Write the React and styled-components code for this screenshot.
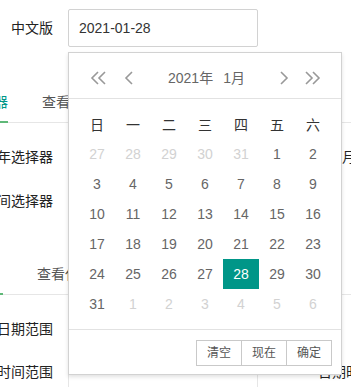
import React from 'react';
import styled, { createGlobalStyle } from 'styled-components';

const GlobalStyle = createGlobalStyle`
    html, body {
        margin: 0;
        padding: 0;
        background: #fff;
    }
    body {
        font-family: "Liberation Sans", "Noto Sans CJK SC", sans-serif;
        font-size: 14px;
        color: #333;
    }
    * {
        box-sizing: border-box;
    }
`;

const Page = styled.div`
    position: relative;
    width: 351px;
    height: 387px;
    overflow: hidden;
    padding-top: 9px;
`;

const Content = styled.div`
    margin-left: -42px;
    width: 900px;
`;

const Row = styled.div`
    display: flex;
    gap: 45px;
    margin-top: ${(p) => p.$top || 0}px;
`;

const FormItem = styled.div`
    display: flex;
    flex-shrink: 0;
`;

const Label = styled.label`
    width: 110px;
    padding: 0 15px;
    line-height: 38px;
    text-align: right;
    white-space: nowrap;
    color: #222;
`;

const Input = styled.div`
    width: 190px;
    height: 38px;
    padding-left: 10px;
    line-height: 36px;
    border: 1px solid ${(p) => (p.$focus ? '#d2d2d2' : '#e6e6e6')};
    border-radius: 2px;
    color: #333;
    background: #fff;
`;

const TabBar = styled.div`
    display: flex;
    height: 41px;
    margin-top: ${(p) => p.$top}px;
    border-bottom: 1px solid #e6e6e6;
`;

const Tab = styled.div`
    position: relative;
    flex-shrink: 0;
    margin-left: ${(p) => p.$ml}px;
    padding-right: ${(p) => p.$pr || 0}px;
    line-height: 40px;
    white-space: nowrap;
    color: ${(p) => (p.$active ? '#009688' : '#555')};

    &::after {
        content: '';
        display: ${(p) => (p.$active ? 'block' : 'none')};
        position: absolute;
        left: 0;
        right: 0;
        bottom: -1px;
        height: 2px;
        background: #5fb878;
    }
`;

const Calendar = styled.div`
    position: absolute;
    left: 68px;
    top: 52px;
    width: 274px;
    background: #fff;
    border: 1px solid #d2d2d2;
    box-shadow: 0 2px 4px rgba(0, 0, 0, 0.12);
`;

const Header = styled.div`
    display: flex;
    align-items: center;
    height: 46px;
    padding: 10px 20px 5px 21px;
    border-bottom: 1px solid #e2e2e2;
`;

const Arrow = styled.svg`
    display: block;
    flex-shrink: 0;
    margin-right: ${(p) => p.$mr || 0}px;
`;

const Title = styled.div`
    flex: 1;
    text-align: center;
    line-height: 30px;
    color: #666;

    span {
        padding: 0 5px;
    }
`;

const Grid = styled.div`
    display: grid;
    grid-template-columns: repeat(7, 36px);
    grid-auto-rows: 30px;
    padding: 10px;
`;

const WeekDay = styled.div`
    display: flex;
    align-items: center;
    justify-content: center;
    color: #333;
`;

const Day = styled.div`
    display: flex;
    align-items: center;
    justify-content: center;
    color: ${(p) => (p.$selected ? '#fff' : p.$other ? '#d2d2d2' : '#666')};
    background: ${(p) => (p.$selected ? '#009688' : 'transparent')};
`;

const Footer = styled.div`
    display: flex;
    justify-content: flex-end;
    padding: 10px 9px 8px;
    border-top: 1px solid #e2e2e2;
`;

const FooterBtn = styled.span`
    height: 26px;
    line-height: 24px;
    padding: 0 10px;
    margin-left: -1px;
    border: 1px solid #c9c9c9;
    font-size: 12px;
    color: #555;
    background: #fff;
`;

const DoubleLeft = () => (
    <Arrow width="17" height="14" viewBox="0 0 17 14" $mr={17}>
        <polyline points="8,1 2,7 8,13" fill="none" stroke="#999" strokeWidth="1.6" />
        <polyline points="15,1 9,7 15,13" fill="none" stroke="#999" strokeWidth="1.6" />
    </Arrow>
);

const Left = () => (
    <Arrow width="10" height="14" viewBox="0 0 10 14">
        <polyline points="8,1 2,7 8,13" fill="none" stroke="#999" strokeWidth="1.6" />
    </Arrow>
);

const Right = () => (
    <Arrow width="10" height="14" viewBox="0 0 10 14" $mr={15}>
        <polyline points="2,1 8,7 2,13" fill="none" stroke="#999" strokeWidth="1.6" />
    </Arrow>
);

const DoubleRight = () => (
    <Arrow width="17" height="14" viewBox="0 0 17 14">
        <polyline points="2,1 8,7 2,13" fill="none" stroke="#999" strokeWidth="1.6" />
        <polyline points="9,1 15,7 9,13" fill="none" stroke="#999" strokeWidth="1.6" />
    </Arrow>
);

const weekDays = ['日', '一', '二', '三', '四', '五', '六'];

const buildDays = () => {
    const days = [];
    [27, 28, 29, 30, 31].forEach((d) => days.push({ d, other: true }));
    for (let d = 1; d <= 31; d += 1) days.push({ d, other: false });
    [1, 2, 3, 4, 5, 6].forEach((d) => days.push({ d, other: true }));
    return days;
};

const Field = ({ label, value, focus }) => (
    <FormItem>
        <Label>{label}</Label>
        <Input $focus={focus}>{value}</Input>
    </FormItem>
);

const App = () => {
    const days = buildDays();

    return (
        <>
            <GlobalStyle />
            <Page>
                <Content>
                    <Row>
                        <Field label="中文版" value="2021-01-28" focus />
                    </Row>

                    <TabBar $top={35}>
                        <Tab $ml={-20} $active>日期选择器</Tab>
                        <Tab $ml={34}>查看代码</Tab>
                    </TabBar>
                    <Row $top={15}>
                        <Field label="年选择器" />
                        <Field label="月选择器" />
                    </Row>
                    <Row $top={6}>
                        <Field label="时间选择器" />
                    </Row>

                    <TabBar $top={34}>
                        <Tab $ml={-14} $pr={3} $active>范围选择</Tab>
                        <Tab $ml={34}>查看代码</Tab>
                    </TabBar>
                    <Row $top={15}>
                        <Field label="日期范围" />
                    </Row>
                    <Row $top={5}>
                        <Field label="时间范围" />
                        <Field label="日期时间范围" />
                    </Row>
                </Content>

                <Calendar>
                    <Header>
                        <DoubleLeft />
                        <Left />
                        <Title>
                            <span>2021年</span>
                            <span>1月</span>
                        </Title>
                        <Right />
                        <DoubleRight />
                    </Header>
                    <Grid>
                        {weekDays.map((w) => (
                            <WeekDay key={w}>{w}</WeekDay>
                        ))}
                        {days.map((item, i) => (
                            <Day
                                key={i}
                                $other={item.other}
                                $selected={!item.other && item.d === 28}
                            >
                                {item.d}
                            </Day>
                        ))}
                    </Grid>
                    <Footer>
                        <FooterBtn>清空</FooterBtn>
                        <FooterBtn>现在</FooterBtn>
                        <FooterBtn>确定</FooterBtn>
                    </Footer>
                </Calendar>
            </Page>
        </>
    );
};

export default App;
